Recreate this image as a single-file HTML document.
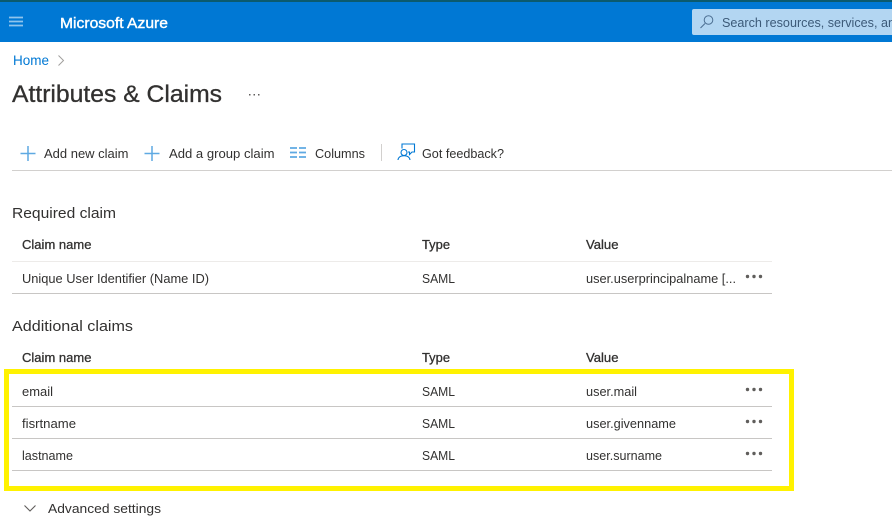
<!DOCTYPE html>
<html><head><meta charset="utf-8"><title>Attributes &amp; Claims</title>
<style>
html,body{margin:0;padding:0;background:#fff;width:892px;height:522px;overflow:hidden}
svg{display:block}
text{font-family:"Liberation Sans",sans-serif;font-size:13px;fill:#323130}
.b{stroke:#323130;stroke-width:.3px}
</style></head><body>
<svg width="892" height="522" viewBox="0 0 892 522" xmlns="http://www.w3.org/2000/svg">
<rect width="892" height="522" fill="#fff"/>
<rect width="892" height="42" fill="#0078d4"/>
<rect width="892" height="2" fill="#0b5a6e"/>
<path d="M9 17.500h14M9 21.500h14M9 25.500h14" stroke="#8fc4ec" stroke-width="1.800" fill="none"/>
<text x="60" y="28" textLength="108" lengthAdjust="spacingAndGlyphs" style="fill:#fff;stroke:#fff;stroke-width:.4px;font-size:15px">Microsoft Azure</text>
<rect x="692" y="9" width="210" height="26" rx="2" fill="#b3d6f2"/>
<circle cx="708.500" cy="20" r="4.300" fill="none" stroke="#4d7093" stroke-width="1"/>
<path d="M705 23.500l-4.500 4.500" stroke="#4d7093" stroke-width="1.100"/>
<text x="722" y="27" textLength="180" lengthAdjust="spacingAndGlyphs" style="fill:#3c5a78">Search resources, services, and</text>
<text x="13" y="65" textLength="36" lengthAdjust="spacingAndGlyphs" style="fill:#0078d4;font-size:14px">Home</text>
<path d="M58.500 55.500l5 5-5 5" fill="none" stroke="#a19f9d" stroke-width="1"/>
<text x="12" y="102" textLength="210" lengthAdjust="spacingAndGlyphs" style="font-size:24px;stroke:#323130;stroke-width:.3px">Attributes &amp; Claims</text>
<g fill="#605e5c"><rect x="249" y="94" width="1.500" height="1.500"/><rect x="253.500" y="94" width="1.500" height="1.500"/><rect x="258" y="94" width="1.500" height="1.500"/></g>
<path d="M28 146v15M20.500 153.500h15" stroke="#5fa9e2" stroke-width="1.500" fill="none"/>
<text x="44" y="158" textLength="84.500" lengthAdjust="spacingAndGlyphs">Add new claim</text>
<path d="M152 146v15M144.500 153.500h15" stroke="#5fa9e2" stroke-width="1.500" fill="none"/>
<text x="169" y="158" textLength="105.500" lengthAdjust="spacingAndGlyphs">Add a group claim</text>
<path d="M290 148h7M299 148h7M290 152.500h7M299 152.500h7M290 157h7M299 157h7" stroke="#5fa9e2" stroke-width="1.700" fill="none"/>
<text x="315" y="158" textLength="50" lengthAdjust="spacingAndGlyphs">Columns</text>
<rect x="381" y="144" width="1" height="17" fill="#d2d0ce"/>
<path d="M402 148.500v-4.500h12.500v8h-2.500l-2.500 2.500v-2.500h-1.500" fill="none" stroke="#0078d4" stroke-width="1.100"/>
<circle cx="404" cy="152.500" r="3" fill="none" stroke="#0078d4" stroke-width="1.100"/>
<path d="M398 160c.3-3 3-4.300 6-4.300s5.700 1.300 6 4.300" fill="none" stroke="#0078d4" stroke-width="1.100"/>
<text x="422" y="158" textLength="82" lengthAdjust="spacingAndGlyphs">Got feedback?</text>
<rect x="12" y="170" width="880" height="1" fill="#d2d0ce"/>

<text x="12" y="218" textLength="104" lengthAdjust="spacingAndGlyphs" style="font-size:15px">Required claim</text>
<text class="b" x="22" y="249" textLength="69.500" lengthAdjust="spacingAndGlyphs">Claim name</text>
<text class="b" x="422" y="249" textLength="28" lengthAdjust="spacingAndGlyphs">Type</text>
<text class="b" x="586" y="249" textLength="32.500" lengthAdjust="spacingAndGlyphs">Value</text>
<rect x="12" y="261" width="760" height="1" fill="#edebe9"/>
<text x="22" y="283" textLength="187" lengthAdjust="spacingAndGlyphs">Unique User Identifier (Name ID)</text>
<text x="422" y="283" textLength="33" lengthAdjust="spacingAndGlyphs">SAML</text>
<text x="586" y="283" textLength="150" lengthAdjust="spacingAndGlyphs">user.userprincipalname [...</text>
<g fill="#605e5c"><circle cx="747.500" cy="276.500" r="1.700"/><circle cx="754" cy="276.500" r="1.700"/><circle cx="760.500" cy="276.500" r="1.700"/></g>
<rect x="12" y="293" width="760" height="1" fill="#c8c6c4"/>

<text x="12" y="331" textLength="121" lengthAdjust="spacingAndGlyphs" style="font-size:15px">Additional claims</text>
<text class="b" x="22" y="362" textLength="69.500" lengthAdjust="spacingAndGlyphs">Claim name</text>
<text class="b" x="422" y="362" textLength="28" lengthAdjust="spacingAndGlyphs">Type</text>
<text class="b" x="586" y="362" textLength="32.500" lengthAdjust="spacingAndGlyphs">Value</text>

<text x="22" y="396" textLength="31" lengthAdjust="spacingAndGlyphs">email</text>
<text x="422" y="396" textLength="33" lengthAdjust="spacingAndGlyphs">SAML</text>
<text x="586" y="396" textLength="51" lengthAdjust="spacingAndGlyphs">user.mail</text>
<g fill="#605e5c"><circle cx="747.500" cy="389.500" r="1.700"/><circle cx="754" cy="389.500" r="1.700"/><circle cx="760.500" cy="389.500" r="1.700"/></g>
<rect x="12" y="406" width="760" height="1" fill="#c8c6c4"/>

<text x="22" y="428" textLength="54" lengthAdjust="spacingAndGlyphs">fisrtname</text>
<text x="422" y="428" textLength="33" lengthAdjust="spacingAndGlyphs">SAML</text>
<text x="586" y="428" textLength="90" lengthAdjust="spacingAndGlyphs">user.givenname</text>
<g fill="#605e5c"><circle cx="747.500" cy="421.500" r="1.700"/><circle cx="754" cy="421.500" r="1.700"/><circle cx="760.500" cy="421.500" r="1.700"/></g>
<rect x="12" y="438" width="760" height="1" fill="#c8c6c4"/>

<text x="22" y="460" textLength="51" lengthAdjust="spacingAndGlyphs">lastname</text>
<text x="422" y="460" textLength="33" lengthAdjust="spacingAndGlyphs">SAML</text>
<text x="586" y="460" textLength="76" lengthAdjust="spacingAndGlyphs">user.surname</text>
<g fill="#605e5c"><circle cx="747.500" cy="453.500" r="1.700"/><circle cx="754" cy="453.500" r="1.700"/><circle cx="760.500" cy="453.500" r="1.700"/></g>
<rect x="12" y="470" width="760" height="1" fill="#c8c6c4"/>

<rect x="6.500" y="371.500" width="785" height="117" fill="none" stroke="#fff200" stroke-width="5"/>

<path d="M24.500 505.500l5.500 5.500 5.500-5.500" fill="none" stroke="#605e5c" stroke-width="1.100"/>
<text x="48" y="513" textLength="113" lengthAdjust="spacingAndGlyphs">Advanced settings</text>
</svg>
</body></html>
